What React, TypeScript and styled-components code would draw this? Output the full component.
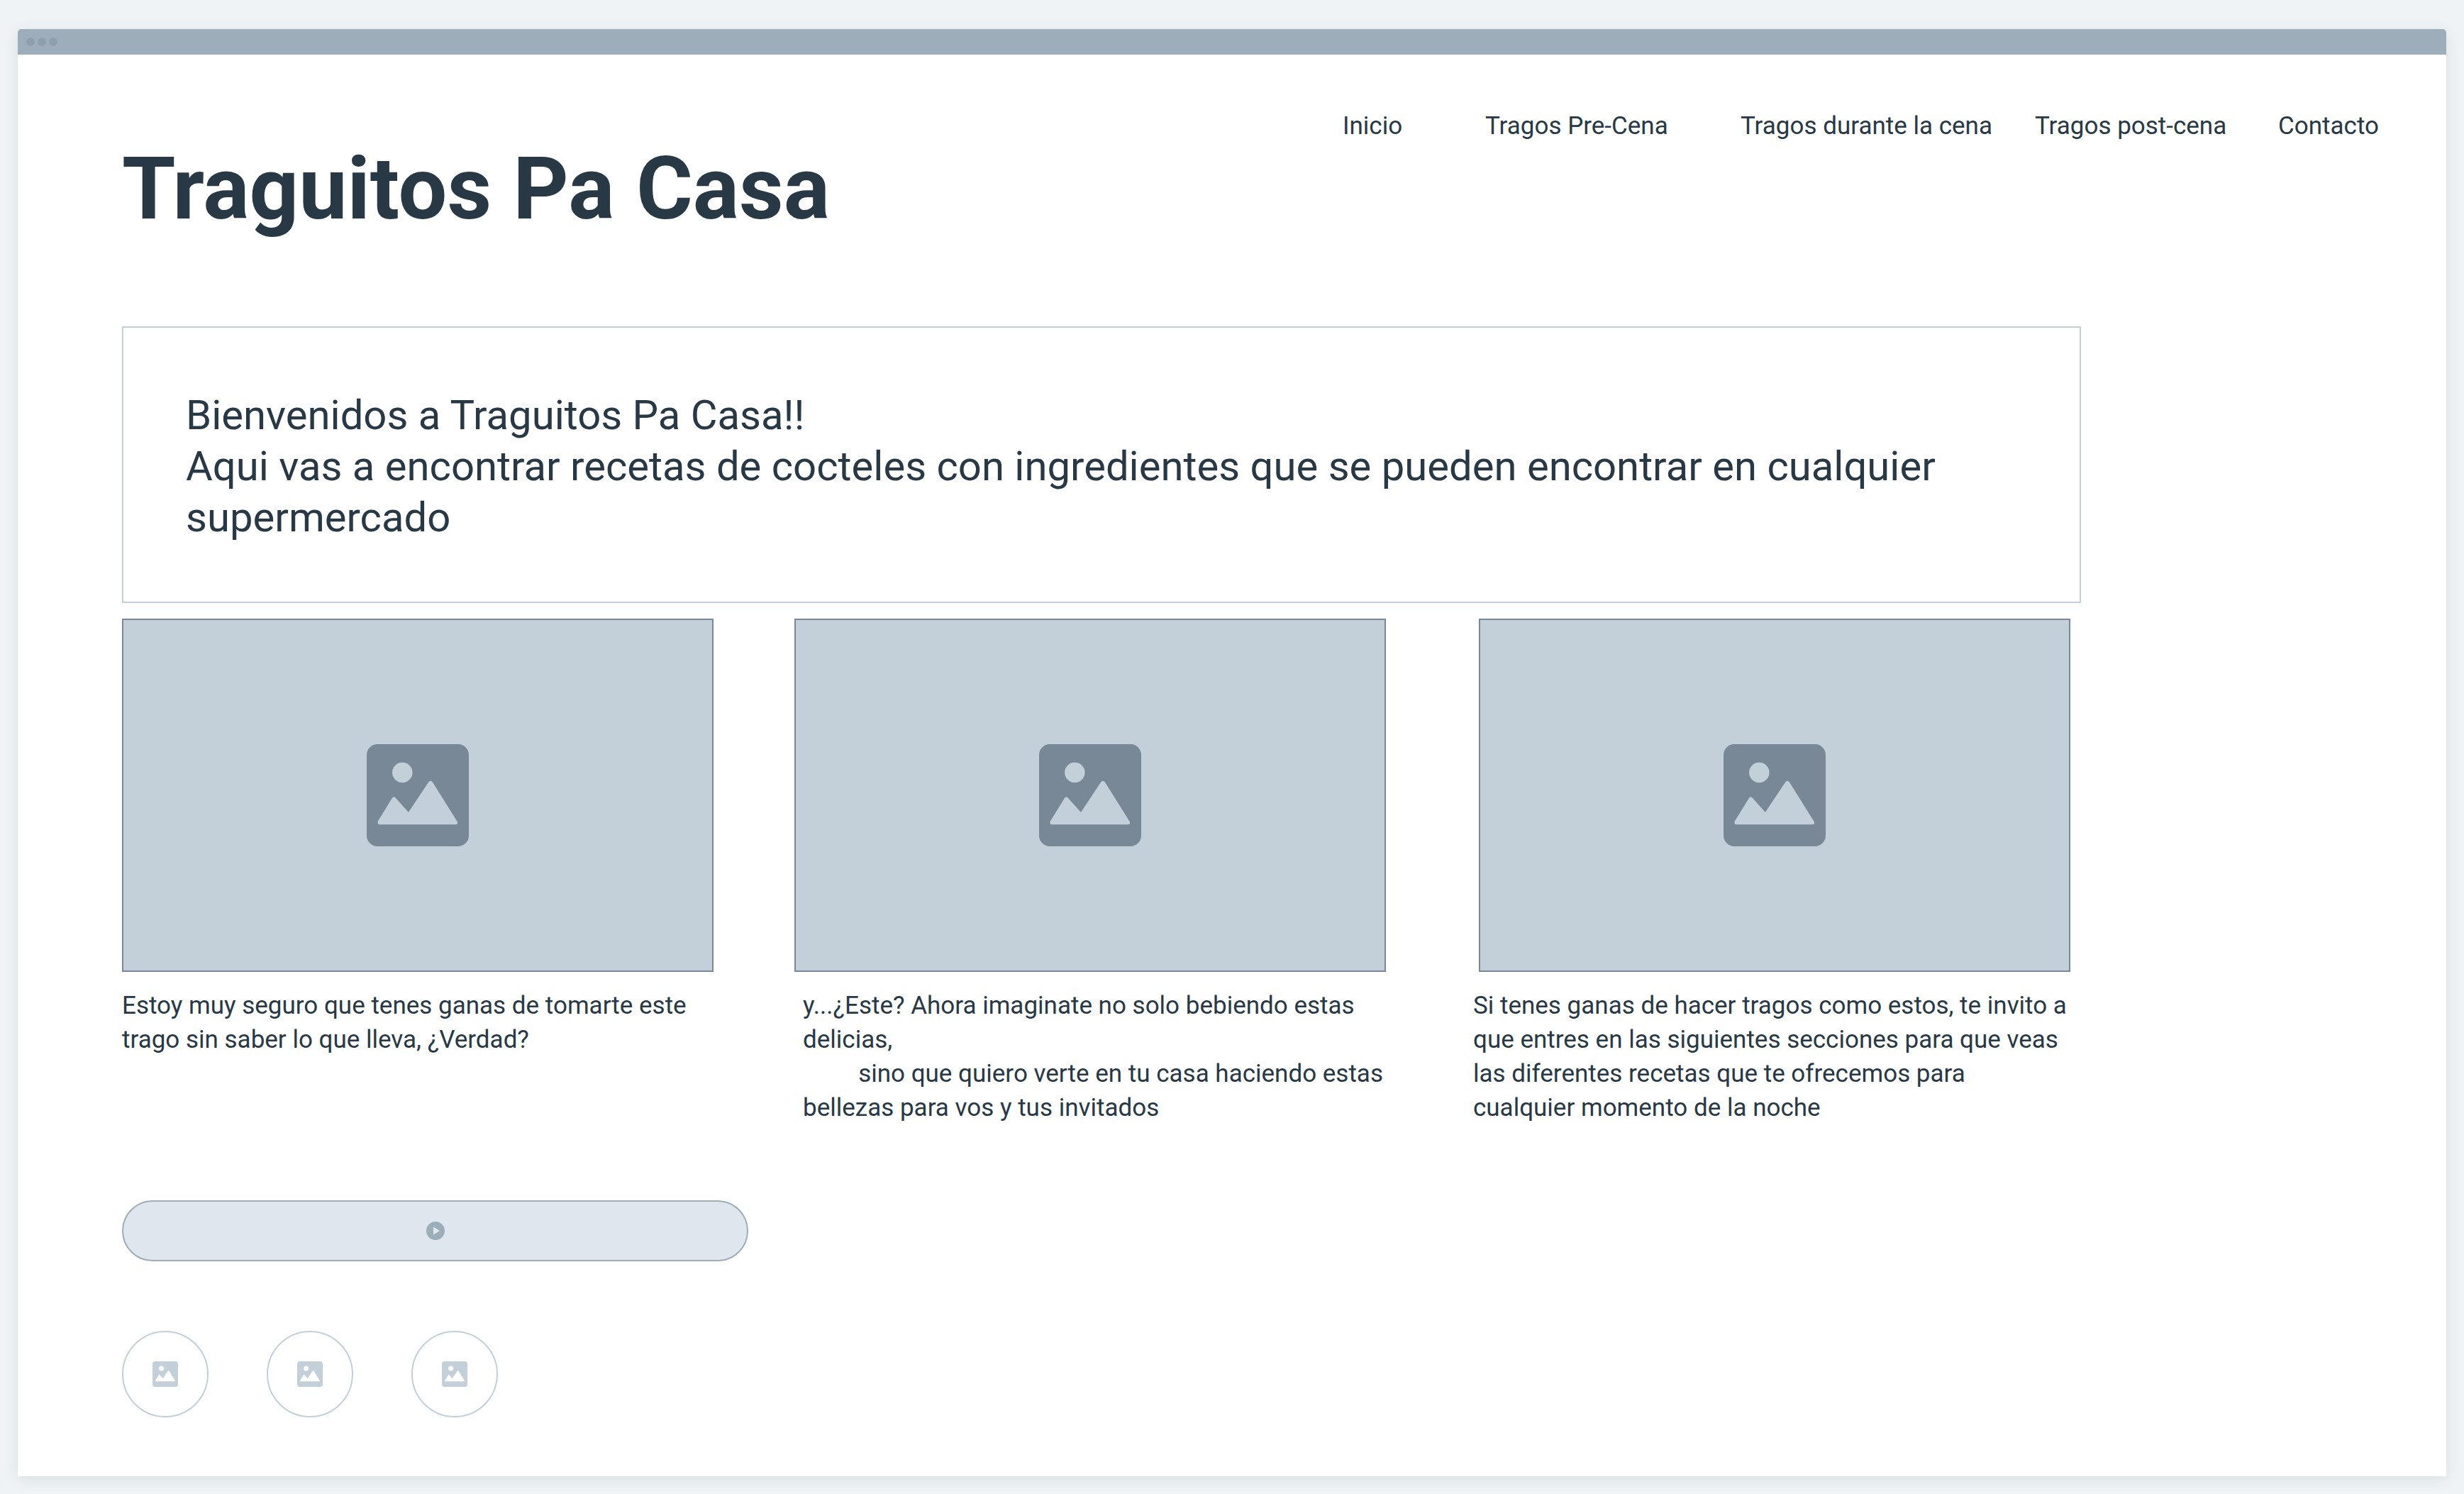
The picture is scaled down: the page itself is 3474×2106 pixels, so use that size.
import React from "react";
import styled, { createGlobalStyle } from "styled-components";

const ink = "#283845";
const steel = "#9dadb9";
const mist = "#c3d0d9";
const slate = "#788896";

const GlobalStyle = createGlobalStyle`
  *, *::before, *::after { box-sizing: border-box; }
  body {
    margin: 0;
    background: #eff3f6;
    color: ${ink};
    font-family: Roboto, "Noto Sans", sans-serif;
    font-size: 35px;
    line-height: 48px;
  }
`;

const Page = styled.div`
  min-height: 100vh;
  padding: 41px 25px 25px;
  display: flex;
`;

const Window = styled.div`
  flex: 1;
  min-width: 0;
  background: #fff;
  border-radius: 5px 5px 0 0;
  box-shadow: 0 4px 20px rgba(40, 56, 69, 0.1);
`;

const TitleBar = styled.div`
  display: flex;
  align-items: center;
  gap: 4px;
  height: 36px;
  padding: 0 12px;
  background: ${steel};
  border-radius: 5px 5px 0 0;
`;

const Dot = styled.span`
  width: 12px;
  height: 12px;
  border-radius: 50%;
  background: #8f9fad;
`;

const Header = styled.header`
  display: flex;
  justify-content: space-between;
  align-items: flex-start;
  padding: 77px 101px 121px 147px;
`;

const SiteTitle = styled.h1`
  margin: 41px 0 0;
  font-size: 122px;
  line-height: 144px;
  font-weight: 700;
  white-space: nowrap;
`;

const Nav = styled.nav`
  display: grid;
  grid-template-columns: 201px 360px 415px 343px 136px;
  white-space: nowrap;
`;

const NavLink = styled.a`
  color: inherit;
  text-decoration: none;
`;

const Main = styled.main`
  padding: 0 515px 0 147px;
`;

const Welcome = styled.p`
  margin: 0 0 22px;
  padding: 87px 88px 83px;
  border: 2px solid ${mist};
  font-size: 58px;
  line-height: 72px;
  white-space: pre-line;
`;

const Gallery = styled.section`
  display: grid;
  grid-template-columns: 948fr 965fr 849fr;
`;

const Card = styled.figure`
  margin: 0;
`;

const Media = styled.div`
  display: flex;
  align-items: center;
  justify-content: center;
  width: 834px;
  max-width: 100%;
  aspect-ratio: 834 / 498;
  background: ${mist};
  border: 2px solid ${slate};
  color: ${slate};
`;

const Caption = styled.figcaption<{ $shift: number }>`
  margin: 24px 0 0 ${(p) => p.$shift}px;
  white-space: pre-wrap;
`;

const Footer = styled.footer`
  padding: 106px 147px 83px;
`;

const PlayButton = styled.button`
  display: flex;
  align-items: center;
  justify-content: center;
  width: 883px;
  max-width: 100%;
  height: 86px;
  padding: 0;
  background: #dfe6ee;
  border: 2px solid ${steel};
  border-radius: 43px;
  color: ${steel};
`;

const Socials = styled.div`
  display: flex;
  gap: 82px;
  margin-top: 98px;
`;

const SocialLink = styled.a`
  display: flex;
  align-items: center;
  justify-content: center;
  width: 122px;
  height: 122px;
  border: 2px solid ${mist};
  border-radius: 50%;
  color: ${mist};
`;

const PictureIcon = ({ size }: { size: number }) => (
  <svg width={size} height={size} viewBox="0 0 435 435" fill="currentColor" aria-hidden="true">
    <path
      fillRule="evenodd"
      d="M46 0H389A46 46 0 0 1 435 46V389A46 46 0 0 1 389 435H46A46 46 0 0 1 0 389V46A46 46 0 0 1 46 0Z
         M195 121A43 43 0 1 0 109 121A43 43 0 1 0 195 121Z
         M54 342H380Q387 342 387 335Q387 332 386 330L280 161Q272 151 264 161L178 290L123 229Q116 221 109 229L48 328Q47 331 47 335Q47 342 54 342Z"
    />
  </svg>
);

const PlayIcon = () => (
  <svg width="26" height="26" viewBox="0 0 26 26" fill="currentColor" aria-hidden="true">
    <path fillRule="evenodd" d="M13 0A13 13 0 1 1 13 26A13 13 0 1 1 13 0ZM10 8V18Q10 19 11 18L18 13.7Q19 13 18 12.3L11 8Q10 7 10 8Z" />
  </svg>
);

const links = ["Inicio", "Tragos Pre-Cena", "Tragos durante la cena", "Tragos post-cena", "Contacto"];

const cards = [
  { shift: 0, text: "Estoy muy seguro que tenes ganas de tomarte este\ntrago sin saber lo que lleva, ¿Verdad?" },
  {
    shift: 12,
    text: "y...¿Este? Ahora imaginate no solo bebiendo estas\ndelicias,\n         sino que quiero verte en tu casa haciendo estas\nbellezas para vos y tus invitados",
  },
  {
    shift: -8,
    text: "Si tenes ganas de hacer tragos como estos, te invito a\nque entres en las siguientes secciones para que veas\nlas diferentes recetas que te ofrecemos para\ncualquier momento de la noche",
  },
];

const socials = ["Red social 1", "Red social 2", "Red social 3"];

export default function App() {
  return (
    <>
      <GlobalStyle />
      <Page>
        <Window>
          <TitleBar>
            <Dot />
            <Dot />
            <Dot />
          </TitleBar>
          <Header>
            <SiteTitle>Traguitos Pa Casa</SiteTitle>
            <Nav>
              {links.map((label) => (
                <NavLink key={label} href="#">{label}</NavLink>
              ))}
            </Nav>
          </Header>
          <Main>
            <Welcome>
              {"Bienvenidos a Traguitos Pa Casa!!\nAqui vas a encontrar recetas de cocteles con ingredientes que se pueden encontrar en cualquier\nsupermercado"}
            </Welcome>
            <Gallery>
              {cards.map((card) => (
                <Card key={card.text}>
                  <Media><PictureIcon size={144} /></Media>
                  <Caption $shift={card.shift}>{card.text}</Caption>
                </Card>
              ))}
            </Gallery>
          </Main>
          <Footer>
            <PlayButton type="button" aria-label="Reproducir"><PlayIcon /></PlayButton>
            <Socials>
              {socials.map((name) => (
                <SocialLink key={name} href="#" aria-label={name}><PictureIcon size={36} /></SocialLink>
              ))}
            </Socials>
          </Footer>
        </Window>
      </Page>
    </>
  );
}
